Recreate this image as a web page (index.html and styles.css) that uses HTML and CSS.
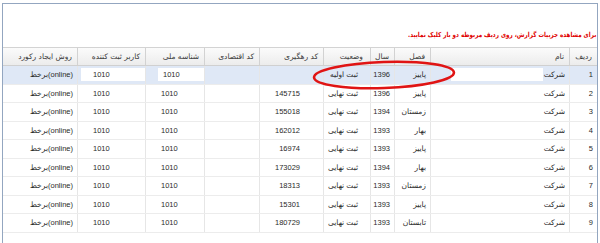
FILE: index.html
```html
<!DOCTYPE html>
<html lang="fa">
<head>
<meta charset="utf-8">
<title>گزارش</title>
<link rel="stylesheet" href="styles.css">
</head>
<body>
<div class="frame">
  <div class="msg"><span class="msg-text">برای مشاهده جزییات گزارش، روی ردیف مربوطه دو بار کلیک نمایید.</span></div>
  <div class="grid">
    <div class="row head">
      <div class="c">ردیف</div>
      <div class="c">نام</div>
      <div class="c">فصل</div>
      <div class="c">سال</div>
      <div class="c st">وضعیت</div>
      <div class="c">کد رهگیری</div>
      <div class="c">کد اقتصادی</div>
      <div class="c">شناسه ملی</div>
      <div class="c">کاربر ثبت کننده</div>
      <div class="c">روش ایجاد رکورد</div>
    </div>
    <div class="row sel">
      <div class="c num">1</div>
      <div class="c name"><span>شرکت</span><span class="box wide"></span></div>
      <div class="c">پاییز</div>
      <div class="c num">1396</div>
      <div class="c st">ثبت اولیه</div>
      <div class="c code"></div>
      <div class="c"></div>
      <div class="c lt"><span class="box b2">1010</span></div>
      <div class="c lt"><span class="box b1">1010</span></div>
      <div class="c">(online)برخط</div>
    </div>
    <div class="row">
      <div class="c num">2</div><div class="c">شرکت</div><div class="c">پاییز</div><div class="c num">1396</div><div class="c st">ثبت نهایی</div><div class="c code">145715</div><div class="c"></div><div class="c lt">1010</div><div class="c lt">1010</div><div class="c">(online)برخط</div>
    </div>
    <div class="row">
      <div class="c num">3</div><div class="c">شرکت</div><div class="c">زمستان</div><div class="c num">1394</div><div class="c st">ثبت نهایی</div><div class="c code">155018</div><div class="c"></div><div class="c lt">1010</div><div class="c lt">1010</div><div class="c">(online)برخط</div>
    </div>
    <div class="row">
      <div class="c num">4</div><div class="c">شرکت</div><div class="c">بهار</div><div class="c num">1393</div><div class="c st">ثبت نهایی</div><div class="c code">162012</div><div class="c"></div><div class="c lt">1010</div><div class="c lt">1010</div><div class="c">(online)برخط</div>
    </div>
    <div class="row">
      <div class="c num">5</div><div class="c">شرکت</div><div class="c">پاییز</div><div class="c num">1393</div><div class="c st">ثبت نهایی</div><div class="c code">16974</div><div class="c"></div><div class="c lt">1010</div><div class="c lt">1010</div><div class="c">(online)برخط</div>
    </div>
    <div class="row">
      <div class="c num">6</div><div class="c">شرکت</div><div class="c">بهار</div><div class="c num">1394</div><div class="c st">ثبت نهایی</div><div class="c code">173029</div><div class="c"></div><div class="c lt">1010</div><div class="c lt">1010</div><div class="c">(online)برخط</div>
    </div>
    <div class="row">
      <div class="c num">7</div><div class="c">شرکت</div><div class="c">زمستان</div><div class="c num">1393</div><div class="c st">ثبت نهایی</div><div class="c code">18313</div><div class="c"></div><div class="c lt">1010</div><div class="c lt">1010</div><div class="c">(online)برخط</div>
    </div>
    <div class="row">
      <div class="c num">8</div><div class="c">شرکت</div><div class="c">پاییز</div><div class="c num">1393</div><div class="c st">ثبت نهایی</div><div class="c code">15301</div><div class="c"></div><div class="c lt">1010</div><div class="c lt">1010</div><div class="c">(online)برخط</div>
    </div>
    <div class="row">
      <div class="c num">9</div><div class="c">شرکت</div><div class="c">تابستان</div><div class="c num">1393</div><div class="c st">ثبت نهایی</div><div class="c code">180729</div><div class="c"></div><div class="c lt">1010</div><div class="c lt">1010</div><div class="c">(online)برخط</div>
    </div>
  </div>
</div>
<svg class="mark" width="600" height="243" viewBox="0 0 600 243">
  <ellipse cx="384" cy="75" rx="70" ry="13" transform="rotate(-2 384 75)" fill="none" stroke="#e01414" stroke-width="2.6"/>
</svg>
</body>
</html>
```

FILE: styles.css
```css
html, body {
  margin: 0;
  padding: 0;
  background: #fff;
}
body {
  width: 600px;
  height: 243px;
  overflow: hidden;
  position: relative;
  font-family: "Liberation Sans", "DejaVu Sans", sans-serif;
  font-size: 7.5px;
  color: #2a2a2a;
}
.frame {
  margin: 3px 2px 0 2px;
  height: 240px;
  box-sizing: border-box;
  border: 1px solid #93a6c0;
  border-bottom: none;
}
.msg {
  height: 43px;
  box-sizing: border-box;
  padding: 0 1px 7px 0;
  display: flex;
  direction: ltr;
  justify-content: flex-end;
  align-items: flex-end;
}
.msg-text {
  direction: rtl;
  white-space: nowrap;
  color: #e00000;
  font-family: "DejaVu Sans", sans-serif;
  font-weight: bold;
  font-size: 7px;
  line-height: 10px;
  transform: scaleX(0.8);
  transform-origin: 100% 50%;
}
.grid {
  direction: rtl;
}
.row {
  display: grid;
  grid-template-columns: 28px 139px 36px 24px 47px 64px 55px 59px 68px 74px;
  height: 18.5px;
  box-sizing: border-box;
  border-bottom: 1px solid #ececec;
}
.c {
  border-left: 1px solid #e6e6e6;
  display: flex;
  align-items: center;
  padding-right: 4px;
  white-space: nowrap;
  overflow: hidden;
}
.c:last-child {
  border-left: none;
}
.head {
  height: 19px;
  border-top: 1px solid #d3d3d3;
  border-bottom: 1px solid #d0d0d0;
  background: linear-gradient(#fbfbfb, #ececec);
  color: #3a3a3a;
  font-family: "DejaVu Sans", sans-serif;
  font-size: 7.5px;
}
.head .c {
  border-left-color: #d2d2d2;
  padding-right: 5px;
}
.head .st {
  padding-right: 7px;
}
.st {
  padding-right: 12px;
}
.code {
  padding-right: 23px;
}
.lt {
  direction: ltr;
  justify-content: flex-start;
  padding-right: 0;
  padding-left: 15px;
}
.sel {
  background: #dfe8f6;
}
.box {
  background: #fff;
  height: 13px;
  display: flex;
  align-items: center;
}
.sel .lt {
  padding-left: 0;
}
.b1 {
  margin-left: 3px;
  width: 66px;
  padding-left: 12px;
  box-sizing: border-box;
}
.b2 {
  margin-left: 12px;
  width: 46px;
  padding-left: 5px;
  box-sizing: border-box;
}
.name {
  gap: 1px;
}
.wide {
  width: 92px;
}
.mark {
  position: absolute;
  left: 0;
  top: 0;
  pointer-events: none;
}
```
